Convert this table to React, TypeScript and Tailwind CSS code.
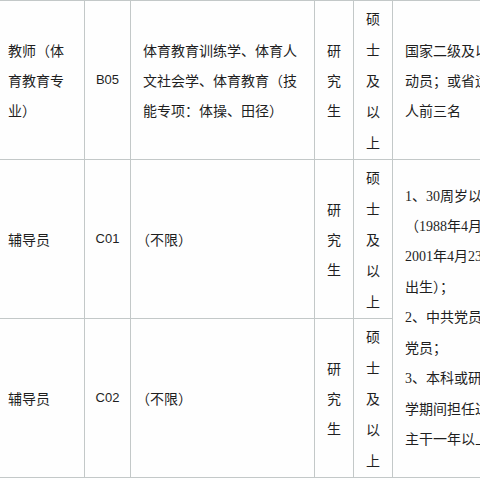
const cjk = "font-['Noto_Sans_CJK_SC','Noto_Sans_CJK_JP',sans-serif]";

function Lines({ lines, className = "" }: { lines: string[]; className?: string }) {
  return (
    <div className={className}>
      {lines.map((line, i) => (
        <div key={i} className="whitespace-nowrap">
          {line}
        </div>
      ))}
    </div>
  );
}

const cell = "flex items-center border-b border-r border-[#c3c8c8]";

export default function App() {
  return (
    <div className={`w-[480px] h-[480px] overflow-hidden bg-[#fefefe] text-[14px] text-[#1f1f1f] ${cjk}`}>
      <div className="grid w-[553px] grid-cols-[85px_46px_184px_39px_39px_160px] grid-rows-[159px_159px_159px] border-t border-[#c3c8c8]">
        {/* row 1 */}
        <div className={`${cell} pl-2`}>
          <Lines lines={["教师（体", "育教育专", "业）"]} className="leading-[30px]" />
        </div>
        <div className={`${cell} justify-center font-['Liberation_Sans',sans-serif] text-[13px]`}>B05</div>
        <div className={`${cell} pl-3`}>
          <Lines
            lines={["体育教育训练学、体育人", "文社会学、体育教育（技", "能专项：体操、田径）"]}
            className="leading-[30px]"
          />
        </div>
        <div className={`${cell} justify-center`}>
          <Lines lines={["研", "究", "生"]} className="leading-[30px] text-center" />
        </div>
        <div className={`${cell} justify-center`}>
          <Lines lines={["硕", "士", "及", "以", "上"]} className="leading-[31px] text-center" />
        </div>
        <div className={`${cell} pl-3`}>
          <Lines
            lines={["国家二级及以上运", "动员；或省运会个", "人前三名"]}
            className="leading-[30px]"
          />
        </div>

        {/* row 2 */}
        <div className={`${cell} pl-2`}>辅导员</div>
        <div className={`${cell} justify-center font-['Liberation_Sans',sans-serif] text-[13px]`}>C01</div>
        <div className={`${cell} pl-3 [font-feature-settings:'halt']`}>（不限）</div>
        <div className={`${cell} justify-center`}>
          <Lines lines={["研", "究", "生"]} className="leading-[30px] text-center" />
        </div>
        <div className={`${cell} justify-center`}>
          <Lines lines={["硕", "士", "及", "以", "上"]} className="leading-[31px] text-center" />
        </div>
        <div className={`${cell} row-span-2 pl-3 font-['Liberation_Serif','Noto_Sans_CJK_SC',serif]`}>
          <Lines
            lines={[
              "1、30周岁以下",
              "（1988年4月23日至",
              "2001年4月23日期间",
              "出生）；",
              "2、中共党员（含预备",
              "党员；",
              "3、本科或研究生在",
              "学期间担任过学生干部",
              "主干一年以上",
            ]}
            className="leading-[30.4px]"
          />
        </div>

        {/* row 3 */}
        <div className={`${cell} pl-2`}>辅导员</div>
        <div className={`${cell} justify-center font-['Liberation_Sans',sans-serif] text-[13px]`}>C02</div>
        <div className={`${cell} pl-3 [font-feature-settings:'halt']`}>（不限）</div>
        <div className={`${cell} justify-center`}>
          <Lines lines={["研", "究", "生"]} className="leading-[30px] text-center" />
        </div>
        <div className={`${cell} justify-center`}>
          <Lines lines={["硕", "士", "及", "以", "上"]} className="leading-[31px] text-center" />
        </div>
      </div>
    </div>
  );
}
